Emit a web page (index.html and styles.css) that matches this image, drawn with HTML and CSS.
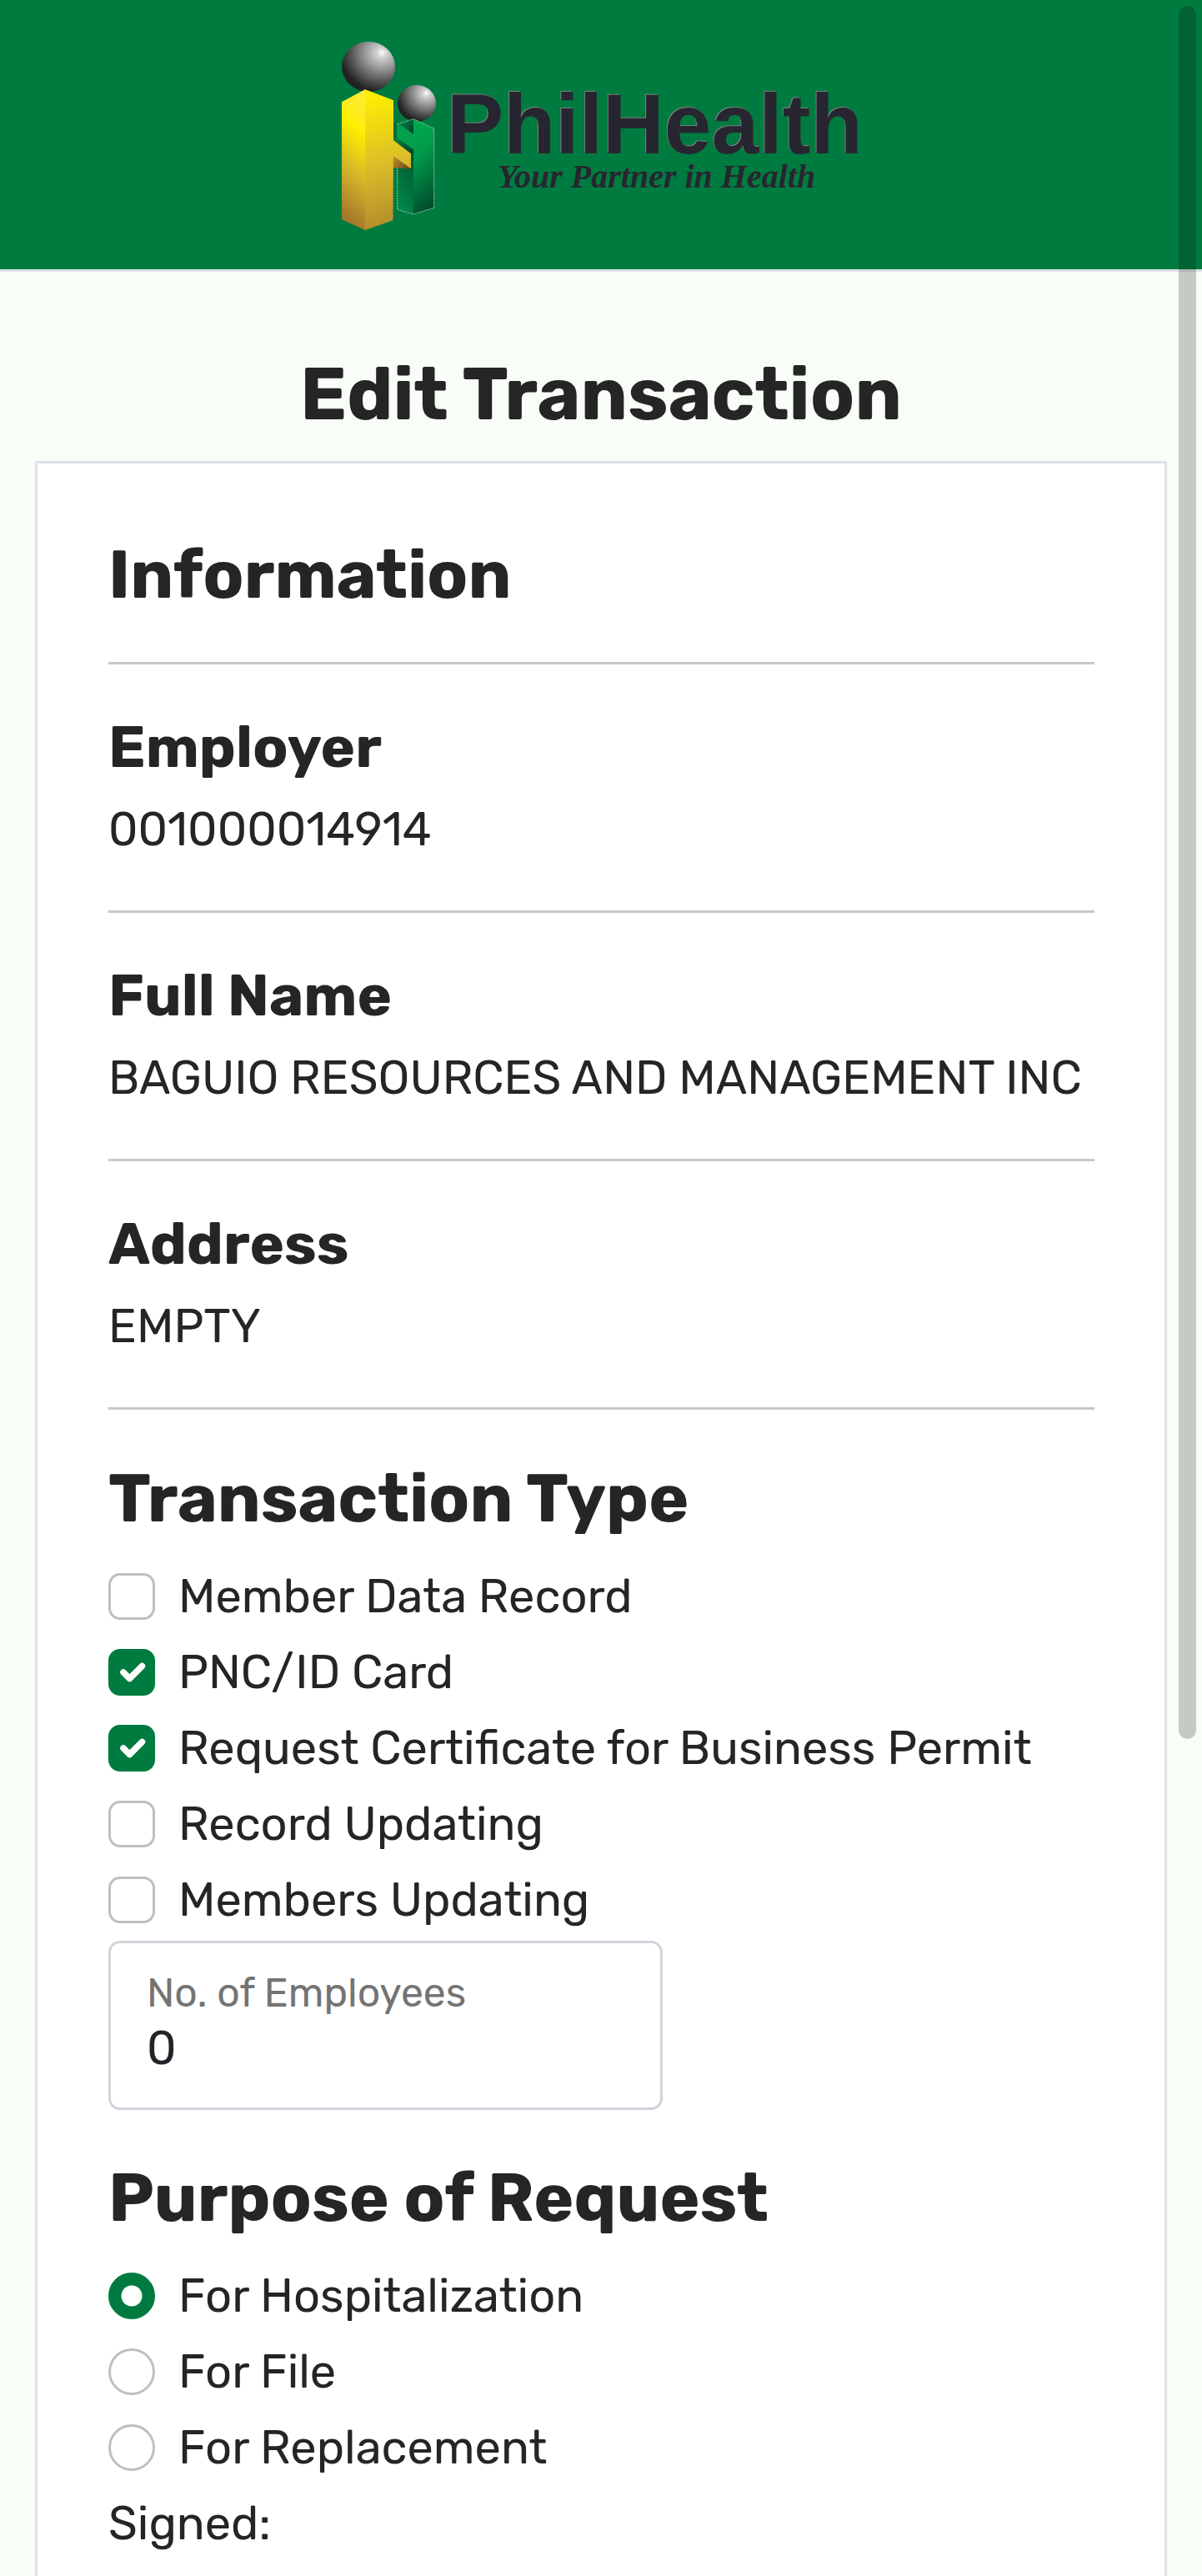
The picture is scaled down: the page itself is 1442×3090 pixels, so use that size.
FILE: index.html
```html
<!DOCTYPE html>
<html lang="en">
<head>
<meta charset="utf-8">
<meta name="viewport" content="width=device-width, initial-scale=1">
<title>Edit Transaction</title>
<link rel="stylesheet" href="styles.css">
</head>
<body>
<header class="site-header">
  <a class="logo-link" href="#" aria-label="PhilHealth, Your Partner in Health">
    <svg class="logo" viewBox="409 49 624 228">
      <defs>
        <radialGradient id="ball" cx="0.75" cy="0.22" r="0.78">
          <stop offset="0" stop-color="#ffffff"/>
          <stop offset="0.12" stop-color="#d2d2d2"/>
          <stop offset="0.5" stop-color="#858585"/>
          <stop offset="0.8" stop-color="#484848"/>
          <stop offset="1" stop-color="#222222"/>
        </radialGradient>
        <linearGradient id="goldSide" x1="0.5" y1="0" x2="0.35" y2="1">
          <stop offset="0" stop-color="#ffec2e"/>
          <stop offset="0.14" stop-color="#ffec20"/>
          <stop offset="0.24" stop-color="#fff000"/>
          <stop offset="0.6" stop-color="#d2b22a"/>
          <stop offset="1" stop-color="#9c6c2c"/>
        </linearGradient>
        <linearGradient id="goldFront" x1="0.4" y1="0" x2="0.5" y2="1">
          <stop offset="0" stop-color="#fff000"/>
          <stop offset="0.5" stop-color="#dcc028"/>
          <stop offset="1" stop-color="#b08a2c"/>
        </linearGradient>
        <linearGradient id="brown" x1="0" y1="0.3" x2="1" y2="0.8">
          <stop offset="0" stop-color="#b98a2c"/>
          <stop offset="1" stop-color="#6e4218"/>
        </linearGradient>
        <linearGradient id="greenFront" x1="0.4" y1="0" x2="0.6" y2="1">
          <stop offset="0" stop-color="#00a850"/>
          <stop offset="0.35" stop-color="#009a4a"/>
          <stop offset="1" stop-color="#00492c"/>
        </linearGradient>
        <linearGradient id="greenSide" x1="0.7" y1="0" x2="0.3" y2="1">
          <stop offset="0" stop-color="#005a32"/>
          <stop offset="1" stop-color="#008a48"/>
        </linearGradient>
        <linearGradient id="greenShade" x1="0" y1="0" x2="1" y2="1">
          <stop offset="0" stop-color="#008a45"/>
          <stop offset="1" stop-color="#003c24"/>
        </linearGradient>
      </defs>
      <ellipse cx="442" cy="80" rx="32" ry="30" fill="url(#ball)"/>
      <ellipse cx="500" cy="124" rx="23" ry="22" fill="url(#ball)"/>
      <path d="M476.7 201H493V184h3v73l-19.300-5.700z" fill="url(#greenSide)"/>
      <path d="M496 142.700l24.700 11.600v95L496 257z" fill="url(#greenFront)"/>
      <path d="M480.700 149l15.300-6.300v18z" fill="url(#greenShade)"/>
      <path d="M476 147.300l20 13.400v18.600L476 165z" fill="#00a04c"/>
      <path d="M471.700 149.300l4.300-2V165l-4.300 2.300z" fill="#006b38"/>
      <path d="M471.700 167.300l4.300-2.300 20 14.300v4.700h-3l-21.300-15z" fill="url(#greenShade)"/>
      <path d="M476.700 201v50.300L496 257l24.700-7.700v-95L496 142.700 476 149" fill="none" stroke="#8fd0ac" stroke-width="1" stroke-dasharray="2 1"/>
      <path d="M472 187l21 15.300-22-1z" fill="url(#brown)"/>
      <path d="M410 122.300l28-15V276l-28-12.700z" fill="url(#goldSide)"/>
      <path d="M438 107.300l34 13v48l21 16v18l-21-15-.5 77L438 276z" fill="url(#goldFront)"/>
      <text class="logo-name" x="536" y="184">PhilHealth</text>
      <text class="logo-tagline" x="597" y="225">Your Partner in Health</text>
    </svg>
  </a>
</header>

<main class="page">
  <h1 class="page-title">Edit Transaction</h1>
  <form class="card">
    <h2 class="section-title">Information</h2>
    <hr class="rule rule-first">
    <section class="detail">
      <h3 class="detail-title">Employer</h3>
      <p class="detail-value">001000014914</p>
    </section>
    <hr class="rule">
    <section class="detail">
      <h3 class="detail-title">Full Name</h3>
      <p class="detail-value">BAGUIO RESOURCES AND MANAGEMENT INC</p>
    </section>
    <hr class="rule">
    <section class="detail">
      <h3 class="detail-title">Address</h3>
      <p class="detail-value">EMPTY</p>
    </section>
    <hr class="rule">

    <h2 class="section-title section-next">Transaction Type</h2>
    <div class="options">
      <label class="option"><input class="check" type="checkbox" name="type"><span>Member Data Record</span></label>
      <label class="option"><input class="check" type="checkbox" name="type" checked><span>PNC/ID Card</span></label>
      <label class="option"><input class="check" type="checkbox" name="type" checked><span>Request Certificate for Business Permit</span></label>
      <label class="option"><input class="check" type="checkbox" name="type"><span>Record Updating</span></label>
      <label class="option"><input class="check" type="checkbox" name="type"><span>Members Updating</span></label>
    </div>
    <div class="field">
      <label class="field-label" for="employees">No. of Employees</label>
      <input class="field-input" id="employees" type="text" inputmode="numeric" value="0">
    </div>

    <h2 class="section-title section-next">Purpose of Request</h2>
    <div class="options">
      <label class="option"><input class="radio" type="radio" name="purpose" checked><span>For Hospitalization</span></label>
      <label class="option"><input class="radio" type="radio" name="purpose"><span>For File</span></label>
      <label class="option"><input class="radio" type="radio" name="purpose"><span>For Replacement</span></label>
      <p class="signed">Signed:</p>
    </div>
  </form>
</main>
<div class="scroll-thumb" aria-hidden="true"></div>
</body>
</html>
```
FILE: styles.css
```css
* {
  box-sizing: border-box;
}

:root {
  --green: #007b40;
  --ink: #252525;
  --line: #dee2e6;
}

body {
  margin: 0;
  min-height: 100vh;
  display: flex;
  flex-direction: column;
  background: #f8fdf7;
  color: var(--ink);
  font-family: Rubik, Roboto, sans-serif;
  font-size: 56px;
  line-height: 84px;
}

h1, h2, h3, p {
  margin: 0;
}

h1, h2, h3 {
  font-weight: 700;
}

/* Header */
.site-header {
  display: flex;
  justify-content: center;
  padding: 49px 42px 46px;
  background: var(--green);
  border-bottom: 3px solid var(--line);
}

.logo-link {
  display: block;
}

.logo {
  display: block;
  width: 624px;
  max-width: 100%;
  overflow: visible;
}

.logo-name {
  font: bold 102px "Liberation Sans", Arial, sans-serif;
  fill: #272630;
  filter: drop-shadow(-1px -1px 0 #77847f);
}

.logo-tagline {
  font: italic bold 40px "Liberation Serif", "Times New Roman", serif;
  fill: #272630;
}

/* Page */
.page {
  flex: 1;
  display: flex;
  flex-direction: column;
  padding: 93px 42px 0;
}

.page-title {
  margin-bottom: 26px;
  font-size: 88px;
  line-height: 108px;
  text-align: center;
}

.card {
  flex: 1;
  padding: 85px 84px 0 85px;
  background: #fff;
  border: 3px solid var(--line);
  border-bottom: 0;
}

.section-title {
  font-size: 81px;
  line-height: 96px;
}

.section-next {
  margin: 57px 0 28px;
}

.rule {
  margin: 55px 0 58px;
  border: 0;
  border-top: 3px solid #c8c8c8;
}

.rule-first {
  margin-top: 57px;
}

.detail-title {
  margin-bottom: 14px;
  font-size: 70px;
  line-height: 84px;
}

/* Options */
.options {
  display: flex;
  flex-direction: column;
  gap: 7px;
}

.option {
  display: flex;
  align-items: center;
  gap: 28px;
}

.check,
.radio {
  appearance: none;
  flex: none;
  width: 56px;
  height: 56px;
  margin: 0;
  border: 3px solid #bfbfbf;
  background: #fff center / 100% no-repeat;
}

.check {
  border-radius: 14px;
}

.radio {
  border-radius: 50%;
}

.check:checked,
.radio:checked {
  border-color: var(--green);
  background-color: var(--green);
}

.check:checked {
  background-image: url("data:image/svg+xml,%3Csvg xmlns='http://www.w3.org/2000/svg' viewBox='0 0 20 20'%3E%3Cpath fill='none' stroke='%23fff' stroke-linecap='round' stroke-linejoin='round' stroke-width='3' d='m6 10 3 3 6-6'/%3E%3C/svg%3E");
}

.radio:checked {
  background-image: radial-gradient(circle, #fff 12px, transparent 13px);
}

/* Number field */
.field {
  display: flex;
  flex-direction: column;
  gap: 4px;
  max-width: 665px;
  margin-top: 7px;
  padding: 32px 43px 37px;
  border: 3px solid #ced4da;
  border-radius: 14px;
}

.field-label {
  color: #747474;
  font-size: 48px;
  line-height: 56px;
}

.field-input {
  width: 100%;
  height: 68px;
  padding: 0;
  border: 0;
  outline: 0;
  background: transparent;
  color: #212529;
  font-family: inherit;
  font-size: 56px;
  line-height: 68px;
}

/* Overlay scroll indicator */
.scroll-thumb {
  position: fixed;
  top: 7px;
  right: 7px;
  width: 21px;
  height: calc(67vh + 9px);
  border-radius: 11px;
  background: rgba(0, 0, 0, 0.2);
  pointer-events: none;
}
```
